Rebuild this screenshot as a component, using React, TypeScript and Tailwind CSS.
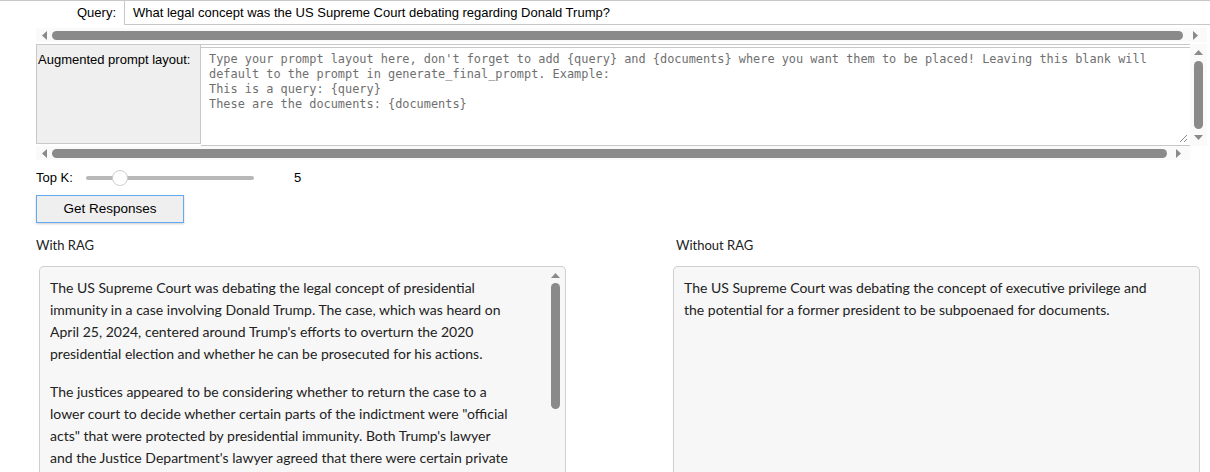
import React from "react";

const Arrow = ({ dir }: { dir: "left" | "right" | "up" | "down" }) => {
  const pts = {
    left: "6,0 6,9 1,4.5",
    right: "1,0 1,9 6,4.5",
    up: "0,6 9,6 4.5,1",
    down: "0,1 9,1 4.5,6",
  }[dir];
  const w = dir === "left" || dir === "right" ? 7 : 9;
  const h = dir === "left" || dir === "right" ? 9 : 7;
  return (
    <svg width={w} height={h} viewBox={`0 0 ${w} ${h}`} className="shrink-0">
      <polygon points={pts} fill="#8a8a8a" />
    </svg>
  );
};

const HScroll = ({ width, thumbEnd }: { width: string; thumbEnd: string }) => (
  <div className={`flex items-center h-[14px] ml-[36px] bg-[#fafafa] ${width}`}>
    <div className="w-[16px] flex justify-center">
      <Arrow dir="left" />
    </div>
    <div className={`h-[9px] rounded-full bg-[#8a8a8a] ${thumbEnd}`} />
    <div className="flex-1 flex justify-center">
      <Arrow dir="right" />
    </div>
  </div>
);

const ragLines1 = [
  "The US Supreme Court was debating the legal concept of presidential",
  "immunity in a case involving Donald Trump. The case, which was heard on",
  "April 25, 2024, centered around Trump's efforts to overturn the 2020",
  "presidential election and whether he can be prosecuted for his actions.",
];

const ragLines2 = [
  "The justices appeared to be considering whether to return the case to a",
  "lower court to decide whether certain parts of the indictment were \"official",
  "acts\" that were protected by presidential immunity. Both Trump's lawyer",
  "and the Justice Department's lawyer agreed that there were certain private",
];

const noRagLines = [
  "The US Supreme Court was debating the concept of executive privilege and",
  "the potential for a former president to be subpoenaed for documents.",
];

const Lines = ({ lines }: { lines: string[] }) => (
  <p>
    {lines.map((l) => (
      <span key={l} className="block whitespace-nowrap">
        {l}
      </span>
    ))}
  </p>
);

export default function App() {
  return (
    <div className="w-[1210px] h-[472px] overflow-hidden bg-white text-[#000] font-['Liberation_Sans',Arial,sans-serif]">
      {/* query row */}
      <div className="flex h-[25px] border-t border-[#c8c8c8]">
        <div className="w-[124px] shrink-0 text-right pr-[8px] text-[13px] leading-[23px]">Query:</div>
        <div className="flex-1 border-l border-b border-[#c8c8c8] pl-[8px] text-[13px] leading-[23px] whitespace-nowrap">
          What legal concept was the US Supreme Court debating regarding Donald Trump?
        </div>
      </div>

      <div className="mt-[3px]">
        <HScroll width="w-[1171px]" thumbEnd="w-[1131px]" />
      </div>

      {/* augmented prompt */}
      <div className="flex ml-[36px] mt-[2px] h-[102px]">
        <div className="w-[165px] shrink-0 h-[100px] bg-[#efefef] border border-[#c8c8c8] text-[13px] leading-[15px] pt-[7px] pl-[1px]">
          Augmented prompt layout:
        </div>
        <div className="w-[989px] flex flex-col border-t border-[#c8c8c8]">
          <div className="mt-[2px] flex-1 bg-white border-t border-b border-[#c8c8c8] relative pt-[4px] pl-[8px] font-['DejaVu_Sans_Mono',monospace] text-[11.9px] leading-[15px] text-[#6f6f6f] whitespace-pre">
            {"Type your prompt layout here, don't forget to add {query} and {documents} where you want them to be placed! Leaving this blank will\ndefault to the prompt in generate_final_prompt. Example:\nThis is a query: {query}\nThese are the documents: {documents}"}
            <svg width="9" height="9" viewBox="0 0 9 9" className="absolute right-[2px] bottom-[2px]">
              <line x1="1" y1="8" x2="8" y2="1" stroke="#888" strokeWidth="1" />
              <line x1="5" y1="8" x2="8" y2="5" stroke="#888" strokeWidth="1" />
            </svg>
          </div>
        </div>
        <div className="w-[17px] flex flex-col items-center bg-[#fafafa] pt-[5px]">
          <Arrow dir="up" />
          <div className="w-[9px] h-[68px] rounded-full bg-[#8a8a8a] mt-[5px]" />
          <div className="mt-[5px]">
            <Arrow dir="down" />
          </div>
        </div>
      </div>

      <div className="mt-[0px]">
        <HScroll width="w-[1154px]" thumbEnd="w-[1115px]" />
      </div>

      {/* top k */}
      <div className="flex items-center ml-[36px] mt-[10px] h-[16px] text-[13px]">
        <span className="w-[50px]">Top K:</span>
        <div className="relative w-[168px] h-[4px] rounded-full bg-[#b8b8b8]">
          <div className="absolute left-[26px] top-[-6px] w-[16px] h-[16px] rounded-full bg-white border border-[#cfcfcf]" />
        </div>
        <span className="ml-[40px]">5</span>
      </div>

      <button className="block ml-[36px] mt-[9px] w-[148px] h-[28px] bg-[#efefef] border border-[#64aaf0] text-[13.5px] shadow-[0_1px_2px_rgba(0,0,0,0.2)]">
        Get Responses
      </button>

      {/* outputs */}
      <div className="flex mt-[13px] ml-[36px] font-['Lato',sans-serif] text-[#222]">
        <div className="w-[529px]">
          <div className="text-[13px] leading-[18px]">With RAG</div>
          <div className="ml-[3px] mt-[12px] w-[527px] h-[220px] rounded-t-[5px] border border-b-0 border-[#cfcfcf] bg-[#f7f7f7] flex">
            <div className="flex-1 pl-[10px] pt-[10px] text-[14px] leading-[22px] flex flex-col gap-[16px]">
              <Lines lines={ragLines1} />
              <Lines lines={ragLines2} />
            </div>
            <div className="w-[16px] mr-[2px] flex flex-col items-center pt-[5px]">
              <Arrow dir="up" />
              <div className="w-[9px] h-[126px] rounded-full bg-[#8a8a8a] mt-[4px]" />
            </div>
          </div>
        </div>
        <div className="ml-[108px] w-[530px]">
          <div className="ml-[3px] text-[13px] leading-[18px]">Without RAG</div>
          <div className="mt-[12px] w-[527px] h-[220px] rounded-t-[5px] border border-b-0 border-[#cfcfcf] bg-[#f7f7f7] pl-[10px] pt-[10px] text-[14px] leading-[22px]">
            <Lines lines={noRagLines} />
          </div>
        </div>
      </div>
    </div>
  );
}
